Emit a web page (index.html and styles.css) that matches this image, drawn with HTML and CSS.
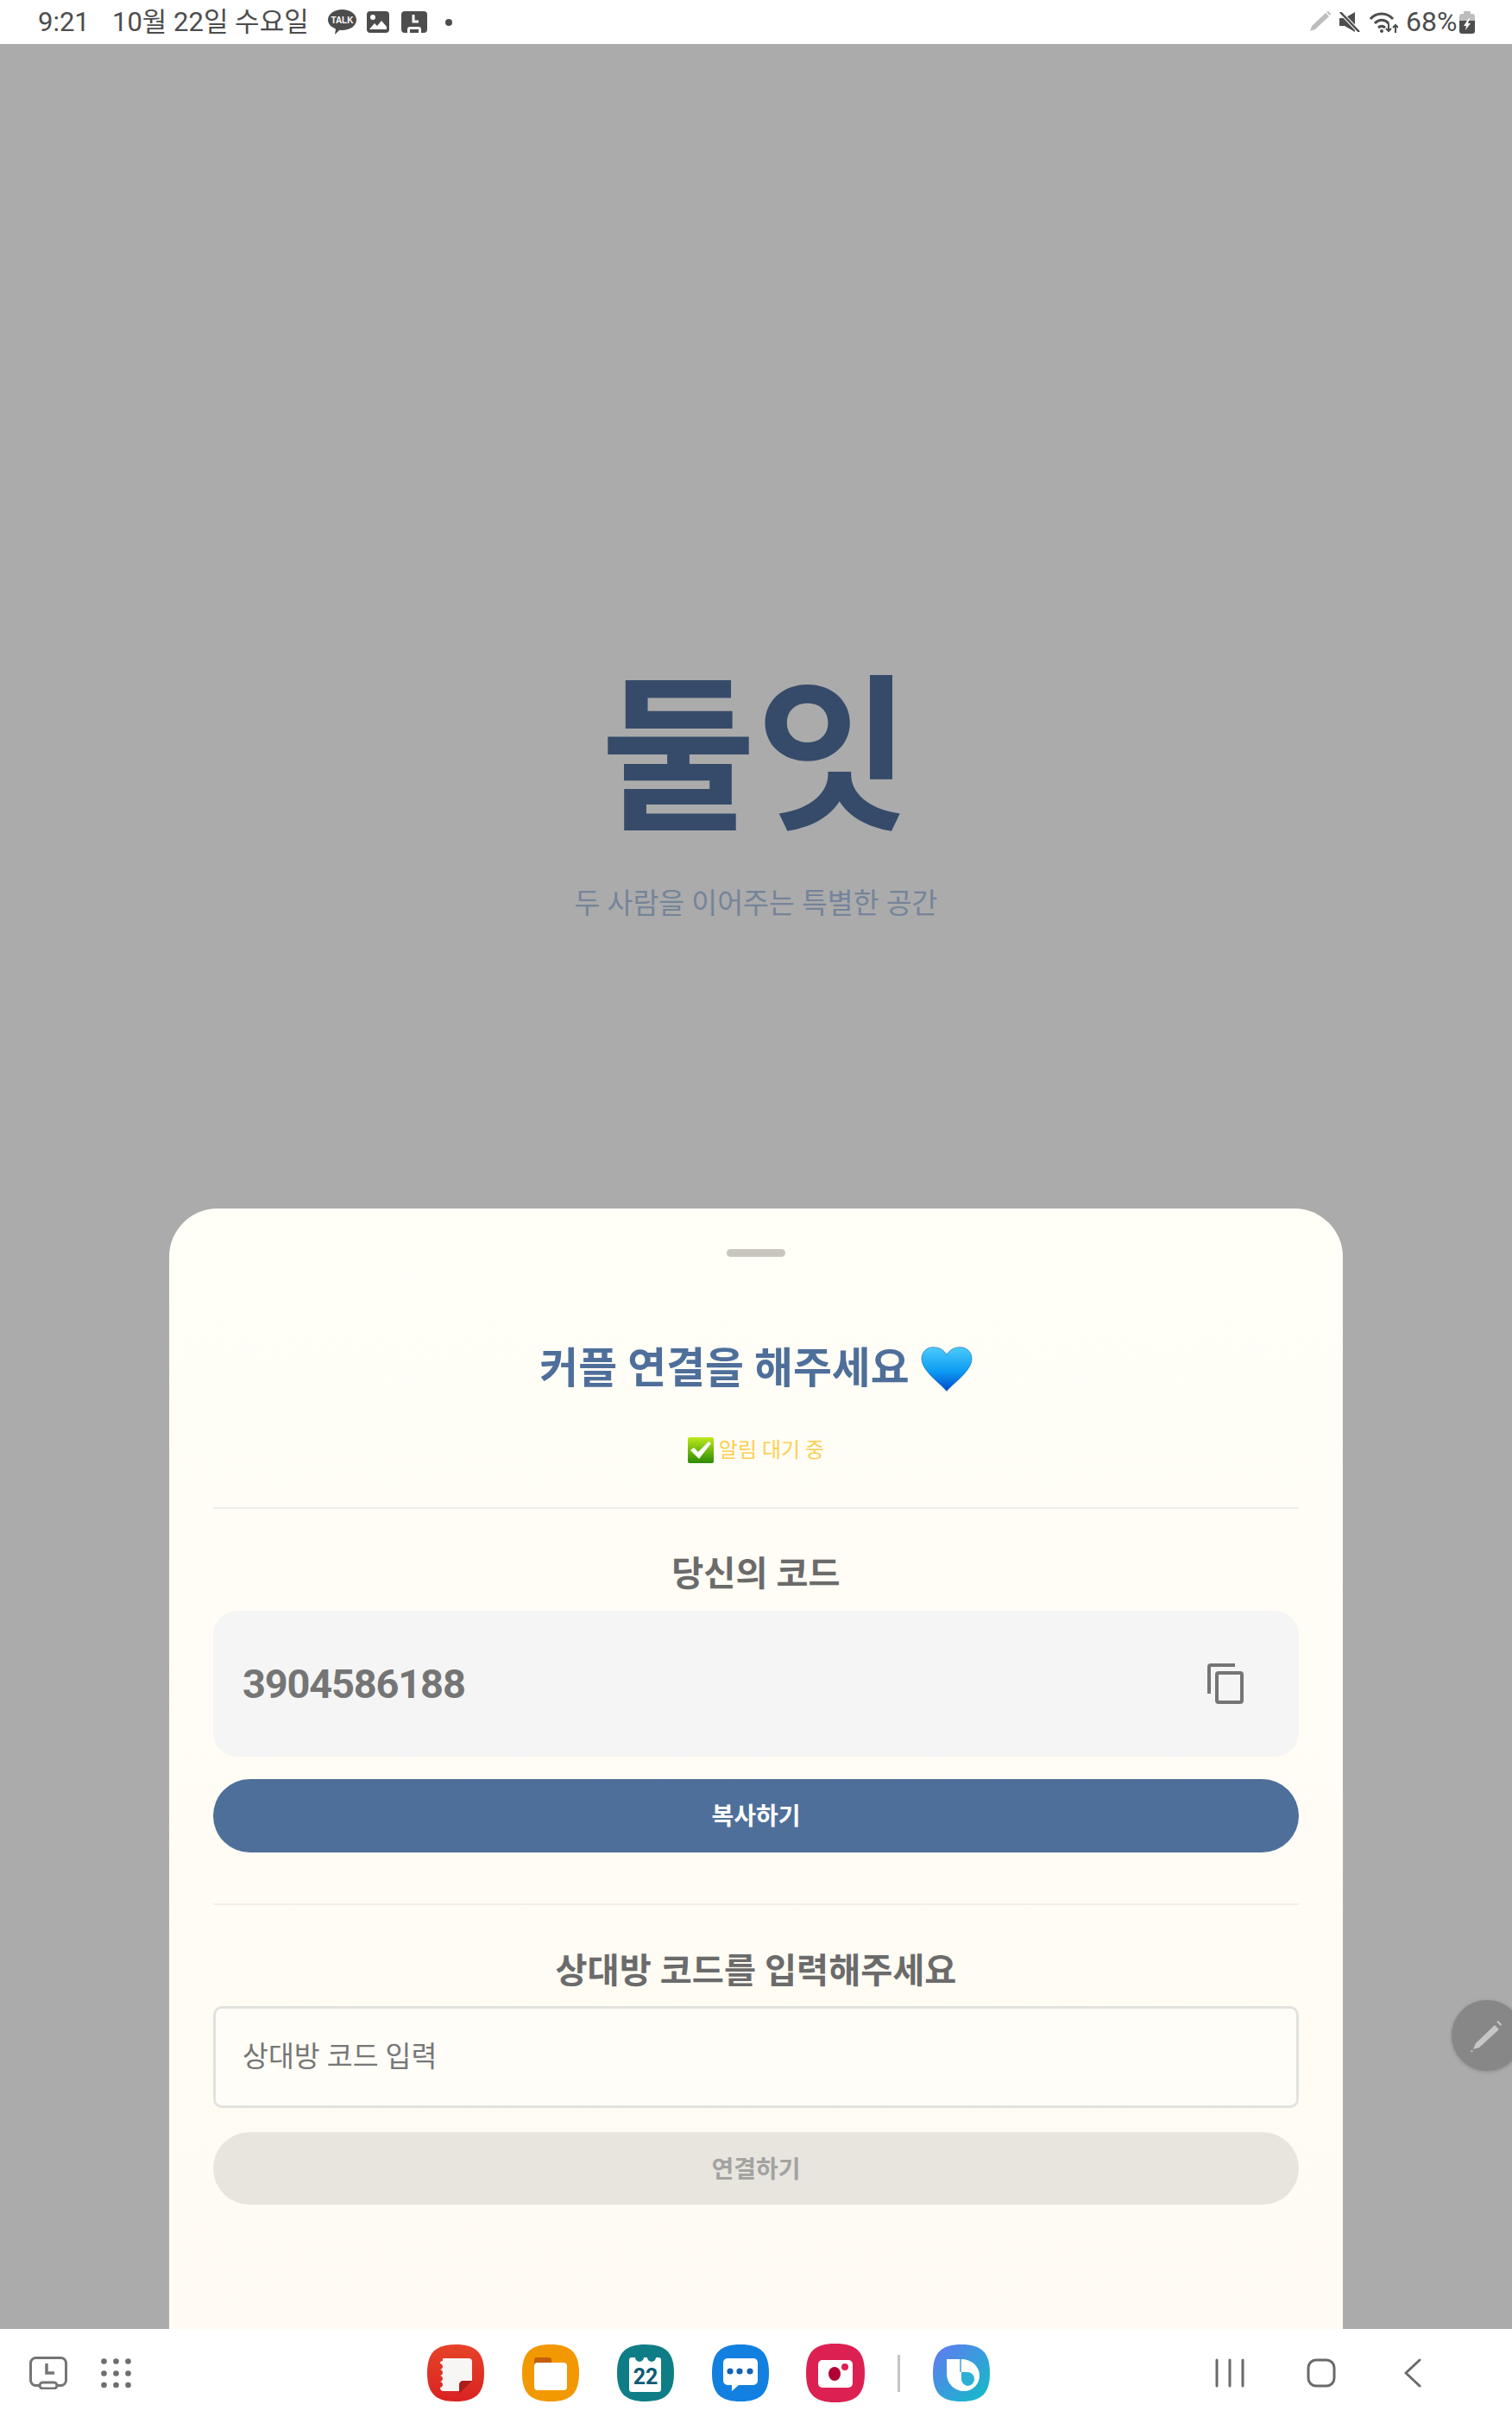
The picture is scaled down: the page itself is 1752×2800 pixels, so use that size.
FILE: index.html
```html
<!DOCTYPE html>
<html lang="ko">
<head>
<meta charset="utf-8">
<title>둘잇</title>
<link rel="stylesheet" href="styles.css">
</head>
<body>
<div class="screen">
  <header class="status">
    <span class="time">9:21</span>
    <span class="date">10월 22일 수요일</span>
    <svg class="ico talk" viewBox="0 0 33 29"><path fill="#4d4d4d" d="M16.500 0C25.600 0 33 5 33 12s-7.400 12-16.500 12c-1 0-2-.1-3-.2L8 29l1-6.600C3.600 20.500 0 16.600 0 12 0 5 7.400 0 16.500 0Z"/><text x="16.500" y="16" class="talk-text" text-anchor="middle">TALK</text></svg>
    <svg class="ico pic" viewBox="0 0 26 25"><rect width="26" height="25" rx="4" fill="#4d4d4d"/><circle cx="7" cy="7" r="3" fill="#fff"/><path fill="#fff" d="M3 21l6-7 3 3 5-6 6 7v3z"/></svg>
    <svg class="ico rem" viewBox="0 0 30 25"><path fill="#4d4d4d" d="M4 0h22a4 4 0 0 1 4 4v17a4 4 0 0 1-4 4h-3v-4a3 3 0 0 0-3-3H10a3 3 0 0 0-3 3v4H4a4 4 0 0 1-4-4V4a4 4 0 0 1 4-4Z"/><path fill="none" stroke="#fff" stroke-width="3" d="M14 4v8h6"/><rect x="10" y="21" width="10" height="4" fill="#4d4d4d"/></svg>
    <span class="dot"></span>
    <div class="status-right">
      <svg class="ico pen" viewBox="0 0 26 25"><path fill="#bdbdbd" d="M20 2l4 4L8 21l-6 2 2-6Z"/><path fill="#bdbdbd" d="M21 1l2-1 3 3-1 2Z"/></svg>
      <svg class="ico mute" viewBox="0 0 24 23"><path fill="#4d4d4d" d="M0 7h6l12-7v23L6 16H0Z"/><path stroke="#fff" stroke-width="4.500" d="M1 0l22 23"/><path stroke="#4d4d4d" stroke-width="2.500" d="M1 0l22 23"/></svg>
      <svg class="ico wifi" viewBox="0 0 33 25"><g fill="none" stroke="#4d4d4d" stroke-width="3"><path d="M1 9C8 1 20 1 27 9"/><path d="M6 14c5-5 11-5 16 0"/><path d="M10 19c3-2.500 5-2.500 8 0"/></g><circle cx="14" cy="23" r="2" fill="#4d4d4d"/><path fill="none" stroke="#4d4d4d" stroke-width="2" d="M22 14v9m-3-3l3 3 3-3M30 25v-9m-3 3l3-3 3 3"/></svg>
      <span class="pct">68%</span>
      <svg class="ico batt" viewBox="0 0 18 26"><path fill="#bdbdbd" d="M5 0h8v3h2a3 3 0 0 1 3 3v6H0V6a3 3 0 0 1 3-3h2Z"/><path fill="#4d4d4d" d="M0 11h18v12a3 3 0 0 1-3 3H3a3 3 0 0 1-3-3Z"/><path fill="#fff" d="M11 8l-6 9h3l-1 5 6-8h-3l2-6Z"/></svg>
    </div>
  </header>

  <main class="main">
    <section class="hero">
      <h1 class="brand">둘잇</h1>
      <p class="tagline">두 사람을 이어주는 특별한 공간</p>
    </section>

    <section class="sheet">
      <div class="handle"></div>
      <h2 class="sheet-title">커플 연결을 해주세요
        <svg class="heart" viewBox="0 0 60 52"><defs><linearGradient id="hg" x1="0" y1="0" x2="0" y2="1"><stop offset="0" stop-color="#4ccbfb"/><stop offset=".55" stop-color="#0c9cf3"/><stop offset="1" stop-color="#0048cc"/></linearGradient></defs><path fill="url(#hg)" stroke="#0a5fae" stroke-width=".6" d="M30 51.500C21 41 1 28 1 14 1 6 7 .7 14.500.7 21 .7 27 4 30 9.500 33 4 39 .7 45.500.7 53 .7 59 6 59 14c0 14-20 27-29 37.500Z"/></svg>
      </h2>
      <p class="notice">
        <svg class="check" viewBox="0 0 30 30"><defs><linearGradient id="cg" x1="0" y1="0" x2="0" y2="1"><stop offset="0" stop-color="#bdea1c"/><stop offset="1" stop-color="#2c8a00"/></linearGradient></defs><rect width="30" height="30" rx="2" fill="url(#cg)"/><path fill="#fff" d="M3 15l4-3 5 5L24 5l3 2-14 18Z"/></svg>
        <span>알림 대기 중</span>
      </p>
      <hr class="rule rule-first">
      <h3 class="label label-first">당신의 코드</h3>
      <div class="code-box">
        <span class="code">3904586188</span>
        <svg class="copy" viewBox="0 0 42 47"><g fill="none" stroke="#757575" stroke-width="4"><path d="M32 2H4a2 2 0 0 0-2 2v31"/><rect x="11" y="11" width="29" height="34" rx="2"/></g></svg>
      </div>
      <button class="btn btn-primary" type="button">복사하기</button>
      <hr class="rule rule-second">
      <h3 class="label label-second">상대방 코드를 입력해주세요</h3>
      <input class="field" type="text" placeholder="상대방 코드 입력">
      <button class="btn btn-muted" type="button">연결하기</button>
    </section>

    <div class="fab">
      <svg class="fab-pen" viewBox="0 0 37 37"><path fill="#c6c6c6" d="M29 6l5 5L11 32l-7 2 3-7Z"/><path fill="#c6c6c6" d="M31 2l2-1 4 4-1 2ZM1 37l1-2 2 1-1 1Z"/></svg>
    </div>
  </main>

  <nav class="nav">
    <svg class="n-clock" viewBox="0 0 44 38"><g fill="none" stroke="#757575" stroke-width="3"><rect x="1.500" y="1.500" width="41" height="32" rx="6"/><rect x="12" y="30" width="20" height="7" rx="3.500" fill="#fff"/></g><path fill="none" stroke="#757575" stroke-width="3.500" d="M20 8v11h9"/></svg>
    <svg class="n-dots" viewBox="0 0 35 34" fill="#6e6e6e"><circle cx="3.500" cy="3.500" r="3.300"/><circle cx="17.500" cy="3.500" r="3.300"/><circle cx="31.500" cy="3.500" r="3.300"/><circle cx="3.500" cy="17.500" r="3.300"/><circle cx="17.500" cy="17.500" r="3.300"/><circle cx="31.500" cy="17.500" r="3.300"/><circle cx="3.500" cy="31" r="3.300"/><circle cx="17.500" cy="31" r="3.300"/><circle cx="31.500" cy="31" r="3.300"/></svg>
    <div class="dock">
      <svg class="app" viewBox="0 0 66 66"><defs><linearGradient id="r" x1="0" y1="0" x2="0" y2="1"><stop offset="0" stop-color="#e64428"/><stop offset="1" stop-color="#d92222"/></linearGradient></defs><path fill="url(#r)" d="M33 0C57 0 66 10 66 33S57 66 33 66 0 56 0 33 9 0 33 0Z"/><path fill="#f7f6f5" d="M18 16h30a4 4 0 0 1 4 4v22H42a5 5 0 0 0-5 5v7H19a4 4 0 0 1-4-4c4-1 4-6 0-7 4-1 4-6 0-7 4-1 4-6 0-7 4-1 4-6 0-7a3 3 0 0 1 3-3Z"/><path fill="#ab1f1c" d="M52 42L37 57V47a5 5 0 0 1 5-5Z"/></svg>
      <svg class="app" viewBox="0 0 66 66"><path fill="#f29800" d="M33 0C57 0 66 10 66 33S57 66 33 66 0 56 0 33 9 0 33 0Z"/><path fill="#c65f0a" d="M17 15h14a3 3 0 0 1 3 3v8H14v-8a3 3 0 0 1 3-3Z"/><rect x="14" y="21" width="38" height="32" rx="4" fill="#fff"/></svg>
      <svg class="app" viewBox="0 0 66 66"><path fill="#0f7d86" d="M33 0C57 0 66 10 66 33S57 66 33 66 0 56 0 33 9 0 33 0Z"/><path fill="#fff" d="M17 15h4a5 5 0 0 0 10 0h4a5 5 0 0 0 10 0h3a3 3 0 0 1 3 3v34a3 3 0 0 1-3 3H17a3 3 0 0 1-3-3V18a3 3 0 0 1 3-3Z"/><text x="33" y="46" class="cal-text" text-anchor="middle">22</text></svg>
      <svg class="app" viewBox="0 0 66 66"><path fill="#1180e0" d="M33 0C57 0 66 10 66 33S57 66 33 66 0 56 0 33 9 0 33 0Z"/><path fill="#fff" d="M18 16h30a5 5 0 0 1 5 5v21a5 5 0 0 1-5 5H31l-8 7v-7h-5a5 5 0 0 1-5-5V21a5 5 0 0 1 5-5Z"/><g fill="#1463b4"><circle cx="21" cy="31" r="3.600"/><circle cx="32" cy="31" r="3.600"/><circle cx="44" cy="31" r="3.600"/></g></svg>
      <svg class="app app-wide" viewBox="0 0 68 68"><path fill="#dc2152" d="M34 0C59 0 68 10 68 34S59 68 34 68 0 58 0 34 9 0 34 0Z"/><rect x="14" y="19" width="40" height="32" rx="5" fill="#fff"/><ellipse cx="33" cy="35" rx="7" ry="8" fill="#b10034"/><circle cx="45" cy="27" r="4" fill="#dc2152"/></svg>
      <span class="dock-sep"></span>
      <svg class="app" viewBox="0 0 66 66"><defs><linearGradient id="b" x1="0" y1="0" x2="1" y2="1"><stop offset="0" stop-color="#6478f2"/><stop offset="1" stop-color="#0fbfc6"/></linearGradient></defs><path fill="url(#b)" d="M33 0C57 0 66 10 66 33S57 66 33 66 0 56 0 33 9 0 33 0Z"/><path fill="#fff" d="M16 17h17a21 19 0 0 1 21 19 18 18 0 0 1-18 18 20 20 0 0 1-20-20Z"/><path fill="#2db0d8" d="M33 32h7a8 8 0 0 1 0 16 8 8 0 0 1-7-8Z"/><path stroke="#4b9ee0" stroke-width="1.500" d="M32 17v15"/></svg>
    </div>
    <svg class="n-recents" viewBox="0 0 34 34"><path fill="none" stroke="#6a6a6a" stroke-width="3" stroke-linecap="round" d="M2 2v30M17 2v30M32 2v30"/></svg>
    <svg class="n-home" viewBox="0 0 34 34"><rect x="2" y="2" width="30" height="30" rx="9" fill="none" stroke="#6a6a6a" stroke-width="3"/></svg>
    <svg class="n-back" viewBox="0 0 20 34"><path fill="none" stroke="#6a6a6a" stroke-width="3" stroke-linecap="round" stroke-linejoin="round" d="M18 2L2 17l16 15"/></svg>
  </nav>
</div>
</body>
</html>
```

FILE: styles.css
```css
* { box-sizing: border-box; }
html, body { margin: 0; padding: 0; }
body {
  font-family: Roboto, "Noto Sans CJK KR", sans-serif;
  background: #ababab;
}
.screen {
  width: 1752px;
  height: 2800px;
  display: flex;
  flex-direction: column;
  overflow: hidden;
}

/* status bar */
.status {
  height: 51px;
  flex: none;
  background: #fff;
  display: flex;
  align-items: center;
  padding: 0 43px 0 44px;
  color: #4d4d4d;
  font-size: 31px;
  line-height: 51px;
}
.ico { display: block; flex: none; }
.time { width: 86px; }
.date { width: 230px; white-space: nowrap; }
.talk { width: 33px; height: 29px; margin-left: 20px; }
.talk-text { font: 700 10px "Liberation Sans", sans-serif; fill: #fff; }
.pic { width: 26px; height: 25px; margin-left: 12px; }
.rem { width: 30px; height: 25px; margin-left: 14px; }
.dot { width: 8px; height: 8px; border-radius: 50%; background: #4d4d4d; margin-left: 21px; }
.status-right { margin-left: auto; display: flex; align-items: center; }
.pen { width: 26px; height: 25px; }
.mute { width: 24px; height: 23px; margin-left: 10px; }
.wifi { width: 33px; height: 25px; margin-left: 11px; }
.pct { margin-left: 9px; width: 56px; white-space: nowrap; font-size: 32px; }
.batt { width: 18px; height: 26px; margin-left: 6px; }

/* main area */
.main {
  flex: 1;
  min-height: 0;
  background: #ababab;
  position: relative;
  display: flex;
  flex-direction: column;
  align-items: center;
  overflow: hidden;
}
.hero { display: flex; flex-direction: column; align-items: center; }
.brand {
  margin: 729px 0 0;
  font-size: 195px;
  line-height: 200px;
  font-weight: 700;
  color: #364b6a;
}
.tagline {
  margin: 47px 0 0;
  font-size: 32.5px;
  line-height: 40px;
  color: #75849a;
}

/* sheet */
.sheet {
  margin-top: auto;
  width: 1360px;
  height: 1298px;
  flex: none;
  background: linear-gradient(#fffef7, #fffbf3);
  border-radius: 56px 56px 0 0;
  padding: 0 51px;
  display: flex;
  flex-direction: column;
  align-items: stretch;
}
.handle {
  width: 68px;
  height: 9px;
  margin: 47px auto 0;
  border-radius: 5px;
  background: #c8c6bf;
}
.sheet-title {
  margin: 100px 0 0;
  height: 60px;
  display: flex;
  justify-content: center;
  align-items: center;
  gap: 13px;
  font-size: 48.8px;
  line-height: 60px;
  font-weight: 700;
  color: #4f6f9b;
}
.heart { width: 60px; height: 52px; display: block; margin-top: 0; }
.notice {
  margin: 44px 0 0;
  height: 40px;
  display: flex;
  justify-content: center;
  align-items: center;
  gap: 6px;
  font-size: 24px;
  line-height: 40px;
  color: #fdcf4f;
}
.check { width: 30px; height: 30px; display: block; }
.rule { border: 0; height: 2px; margin: 0; background: #f0efea; flex: none; }
.rule-first { margin-top: 46px; }
.rule-second { margin-top: 59px; }
.label {
  margin: 0;
  height: 56px;
  text-align: center;
  font-size: 40.3px;
  line-height: 56px;
  font-weight: 700;
  color: #6b6b6b;
}
.label-first { margin-top: 48px; }
.label-second { margin-top: 49px; }
.code-box {
  margin-top: 14px;
  height: 169px;
  background: #f5f5f5;
  border-radius: 28px;
  display: flex;
  align-items: center;
  justify-content: space-between;
  padding: 0 64px 0 34px;
}
.code { font-size: 47px; letter-spacing: -1.2px; font-weight: 700; color: #757575; line-height: 56px; }
.copy { width: 42px; height: 47px; display: block; }
.btn {
  display: block;
  width: 100%;
  border: 0;
  padding: 0 0 3px;
  border-radius: 43px;
  font-family: inherit;
  font-size: 28px;
  font-weight: 700;
}
.btn-primary { margin-top: 26px; height: 85px; background: #4f6f9b; color: #fff; }
.btn-muted { margin-top: 28px; height: 84px; background: #e8e5df; color: #a3a3a0; }
.field {
  margin-top: 12px;
  height: 118px;
  width: 100%;
  border: 3px solid #e2e2df;
  border-radius: 10px;
  background: #fefdf7;
  padding: 0 31px;
  font-family: inherit;
  font-size: 32.5px;
  color: #757575;
  outline: none;
}
.field::placeholder { color: #777; opacity: 1; }

/* floating pen */
.fab {
  position: absolute;
  top: 2266px;
  right: -12px;
  width: 82px;
  height: 82px;
  border-radius: 50%;
  background: #878787;
  box-shadow: 0 1px 4px rgba(0, 0, 0, .2);
  display: flex;
  align-items: center;
  padding-left: 21px;
}
.fab-pen { width: 37px; height: 37px; display: block; }

/* navigation bar */
.nav {
  height: 102px;
  flex: none;
  background: #fff;
  display: flex;
  align-items: center;
  padding-left: 34px;
}
.n-clock { width: 44px; height: 38px; display: block; }
.n-dots { width: 35px; height: 34px; display: block; margin-left: 39px; }
.dock { display: flex; align-items: center; gap: 44px; margin-left: 343px; }
.app { width: 66px; height: 66px; display: block; flex: none; }
.app-wide { width: 68px; height: 68px; margin-left: -1px; }
.dock-sep { width: 3px; height: 43px; background: #c4c4c4; margin: 0 -6px; }
.cal-text { font: 700 25px Roboto, sans-serif; fill: #0e5a75; }
.n-recents { width: 34px; height: 34px; display: block; margin-left: 261px; }
.n-home { width: 34px; height: 34px; display: block; margin-left: 72px; }
.n-back { width: 20px; height: 34px; display: block; margin-left: 79px; }
```
